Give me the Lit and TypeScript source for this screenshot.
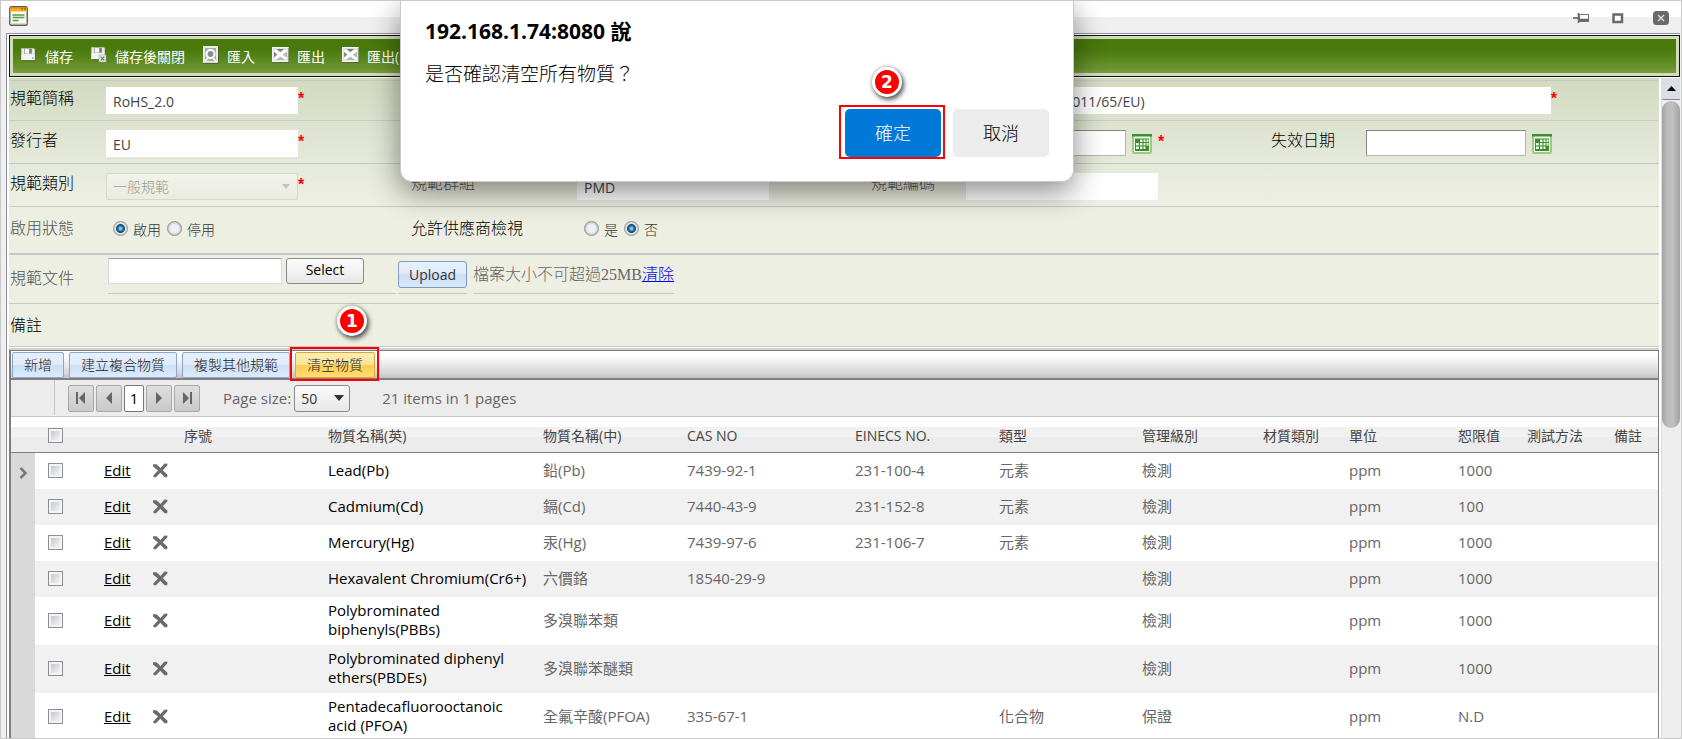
import { LitElement, html, css, svg, nothing } from "lit";
import { customElement, state } from "lit/decorators.js";

interface Substance {
  en: string;
  zh: string;
  cas: string;
  einecs: string;
  kind: string;
  level: string;
  unit: string;
  limit: string;
}

const substances: Substance[] = [
  { en: "Lead(Pb)", zh: "鉛(Pb)", cas: "7439-92-1", einecs: "231-100-4", kind: "元素", level: "檢測", unit: "ppm", limit: "1000" },
  { en: "Cadmium(Cd)", zh: "鎘(Cd)", cas: "7440-43-9", einecs: "231-152-8", kind: "元素", level: "檢測", unit: "ppm", limit: "100" },
  { en: "Mercury(Hg)", zh: "汞(Hg)", cas: "7439-97-6", einecs: "231-106-7", kind: "元素", level: "檢測", unit: "ppm", limit: "1000" },
  { en: "Hexavalent Chromium(Cr6+)", zh: "六價鉻", cas: "18540-29-9", einecs: "", kind: "", level: "檢測", unit: "ppm", limit: "1000" },
  { en: "Polybrominated biphenyls(PBBs)", zh: "多溴聯苯類", cas: "", einecs: "", kind: "", level: "檢測", unit: "ppm", limit: "1000" },
  { en: "Polybrominated diphenyl ethers(PBDEs)", zh: "多溴聯苯醚類", cas: "", einecs: "", kind: "", level: "檢測", unit: "ppm", limit: "1000" },
  { en: "Pentadecafluorooctanoic acid (PFOA)", zh: "全氟辛酸(PFOA)", cas: "335-67-1", einecs: "", kind: "化合物", level: "保證", unit: "ppm", limit: "N.D" },
];

const floppy = svg`
  <path d="M1.5 2.5h12.500l1 1v10.500h-13.500z" fill="#e9e9e9" stroke="#c4c9bc" stroke-width=".6"/>
  <rect x="4" y="2.500" width="8" height="5.500" fill="#a9ada6"/>
  <rect x="5" y="3" width="4" height="4.500" fill="#f6f6f6"/>
  <rect x="9.500" y="3" width="2" height="4" fill="#777c73"/>
  <path d="M1.500 8.500h13.500v5.500H1.500z" fill="#f4f4f4"/>
  <rect x="12" y="11.500" width="1.500" height="1" fill="#6d7368"/>
  <path d="M15.300 4v10.800H2.500" fill="none" stroke="#33500f" stroke-width="1" opacity=".55"/>`;

const sheet = svg`
  <rect x="0" y="1" width="17" height="15" fill="#e2e2e2"/>
  <path d="M2 3h13v11H2z" fill="#b9bcb6"/>
  <path d="M2 3.500h2.500l3.700 3 4-3H15v2l-4.500 3.200 4.500 3v2h-2l-4.700-3.200-4.300 3.200H2v-2l3.700-3L2 5.500z" fill="#fff"/>
  <path d="M2 5.800l3 2.700-3 2.800z" fill="#858b80"/>
  <path d="M5 3h6.500L8.300 5.800z" fill="#777c73"/>
  <rect x=".5" y="1.500" width="16" height="14" fill="none" stroke="#f8f8f8"/>
  <path d="M.5 16.500h16.200V1.500" fill="none" stroke="#405a22" opacity=".7"/>`;

const icons = {
  save: floppy,
  saveClose: svg`<g transform="translate(0 -1)">${floppy}</g>
    <rect x="9" y="9" width="7" height="7" fill="#efefef" stroke="#97a08b" stroke-width=".6"/>
    <path d="M10.700 10.700l3.600 3.600M14.300 10.700l-3.600 3.600" stroke="#777" stroke-width="1.200"/>`,
  importFile: svg`
    <rect x="1" y="0" width="15" height="17" fill="#ececec"/>
    <rect x="3" y="2" width="11" height="13" fill="#aaa"/>
    <circle cx="8.500" cy="8" r="4" fill="#8d8d8d" stroke="#fff" stroke-width="2"/>
    <path d="M3 15l3-3M14 15l-3-3" stroke="#fff" stroke-width="1.500"/>
    <path d="M1.500 17.300h15V1" fill="none" stroke="#405a22" opacity=".7"/>`,
  exportFile: sheet,
};

const calendar = svg`
  <rect x="1" y="1" width="18" height="18" rx="1" fill="#f3faef" stroke="#9bcb83" stroke-width="2"/>
  <rect x="0" y="0" width="20" height="2.500" fill="#3f8f33"/>
  <rect x="3" y="4.500" width="14" height="12.500" fill="#3d8f2e"/>
  <path d="M8 5.500h2.400v2.500H8zM11.500 5.500h2v2.500h-2zM14.500 5.500h2v2.500h-2zM4 9h2.800v2.500H4zM8 9h2.400v2.500H8zM11.500 9h2v2.500h-2zM14.500 9h2v2.500h-2zM4 12.500h2.800v2.500H4zM8 12.500h2.400v2.500H8zM11.500 12.500h2v2.500h-2z" fill="#e9f6e4"/>`;

const sharedStyles = css`
  *, *::before, *::after { box-sizing: border-box; }
  button, input, select { font: inherit; color: inherit; margin: 0; }
  svg { display: block; flex: none; }
`;

@customElement("confirm-dialog")
export class ConfirmDialog extends LitElement {
  static styles = [sharedStyles, css`
    :host { display: block; }
    .box {
      padding: 16px 24px 24px;
      border: 1px solid #c9c9c9;
      border-top: 0;
      border-radius: 0 0 12px 12px;
      background: #fff;
      color: #000;
      box-shadow: 0 10px 30px rgba(0, 0, 0, .45);
    }
    .title { margin: 0; font-size: 21px; line-height: 28px; font-weight: 700; }
    .message { margin: 14px 0 20px; font-size: 19px; line-height: 30px; font-weight: 300; }
    .actions { display: flex; justify-content: flex-end; gap: 12px; }
    .slot { position: relative; }
    .btn {
      display: block; width: 96px; height: 48px; padding: 0 0 2px;
      border: 0; border-radius: 5px; background: #ececec; font-size: 18px; font-weight: 300;
    }
    .primary { background: #0078d7; color: #fff; }
    .mark { position: absolute; inset: -4px -4px -2px -6px; border: 2px solid #f00; pointer-events: none; }
    .badge { position: absolute; left: 27px; top: -42px; }
  `];

  render() {
    return html`
      <div class="box" role="alertdialog" aria-labelledby="t" aria-describedby="m">
        <h2 class="title" id="t">192.168.1.74:8080 說</h2>
        <p class="message" id="m">是否確認清空所有物質？</p>
        <div class="actions">
          <div class="slot">
            <button class="btn primary" type="button">確定</button>
            <span class="mark"></span>
            <step-badge class="badge" .step=${2}></step-badge>
          </div>
          <button class="btn" type="button">取消</button>
        </div>
      </div>`;
  }
}

@customElement("step-badge")
export class StepBadge extends LitElement {
  static properties = { step: { type: Number } };
  declare step: number;
  static styles = css`
    :host {
      display: flex; align-items: center; justify-content: center;
      box-sizing: border-box; width: 30px; height: 30px;
      border: 3px solid #fff; border-radius: 50%;
      background: #f00; color: #fff;
      font: 700 17px/1 "DejaVu Sans", sans-serif;
      box-shadow: 2px 3px 5px rgba(0, 0, 0, .6), 0 0 4px rgba(0, 0, 0, .35);
    }
  `;
  render() { return html`${this.step}`; }
}

@customElement("spec-form")
export class SpecForm extends LitElement {
  static styles = [sharedStyles, css`
    :host { display: block; font-size: 14px; color: #333; }
    .form {
      padding-top: 2px;
      background: linear-gradient(#d2dabf, #dde3cf 46px, #e6eadb 90px, #edefe2 130px);
      border-bottom: 1px solid #fff;
    }
    .row {
      display: grid;
      grid-template-columns: 96px 305fr 166px 294fr 95px 305fr 95px 293fr;
      align-items: start;
      padding: 6px 0 6px 1px;
      border-top: 1px solid #c8c8cc;
    }
    .r-std { height: 43px; }
    .r-first { height: 40px; }
    .r-radio { height: 47px; }
    .r-file { height: 50px; border-top-width: 2px; padding-top: 2px; }
    .r-memo { height: 44px; border-bottom: 1px solid #c8c8cc; }
    .label { font-size: 16px; line-height: 22px; color: #000; font-weight: 300; }
    .r-std .label { padding-top: 2px; }
    .r-radio .label, .r-memo .label { padding-top: 4px; }
    .r-file .label { padding-top: 10px; }
    .dim { color: #555; }
    .field { display: flex; align-items: flex-start; min-width: 0; }
    .long { grid-column: 4 / -1; padding-right: 102px; }
    .long .text { flex: 1; }
    .wide { grid-column: span 7; }
    .text {
      width: 192px; height: 27px; padding: 1px 7px 0; border: 0;
      background: #fff; color: #444;
    }
    .r-std .text, .r-std .date, .r-std .pick { margin-top: 3px; }
    .date {
      width: 160px; height: 26px; padding: 0 6px; background: #fff;
      border: 1px solid #b4b4b4; border-top-color: #868686; border-left-color: #868686;
    }
    .date-btn { margin: 7px 0 0 6px; padding: 0; border: 0; background: none; }
    .req { color: #f00; font-size: 16px; line-height: 24px; font-family: "Liberation Sans", sans-serif; font-weight: 700; }
    .r-std .req { padding-top: 3px; }
    .date-btn + .req { margin-left: 6px; }
    .pick {
      width: 192px; height: 27px; padding: 0 18px 0 6px;
      border: 1px solid #d4d7c9; border-radius: 2px; appearance: none;
      color: #9a9c90; opacity: 1; font-weight: 300;
      background:
        conic-gradient(from -45deg at 50% 100%, #c3c6b8 90deg, transparent 0) right 7px center / 8px 4px no-repeat,
        linear-gradient(#f2f3eb, #eaece1);
      background:
        url('data:image/svg+xml,<svg xmlns="http://www.w3.org/2000/svg" viewBox="0 0 8 5"><path d="M0 0h8L4 5z" fill="%23c3c6b8"/></svg>') right 7px center / 8px 5px no-repeat,
        linear-gradient(#f2f3eb, #eaece1);
    }
    .radios { display: flex; padding-top: 7px; padding-left: 7px; font-weight: 300; }
    .radios label { display: flex; align-items: center; gap: 5px; margin-right: 6px; line-height: 20px; }
    .radio {
      appearance: none; width: 15px; height: 15px; border-radius: 50%;
      border: 1px solid #8f9498; margin-bottom: 4px;
      background: radial-gradient(circle, #eceff3 45%, #b9bec4 75%);
    }
    .radio:checked { background: radial-gradient(circle at 50% 50%, #7fc4e8 0 1px, #1d618f 3px, #17496b 4px, #dfe7ec 5px, #b9bec4 8px); }
    .file { display: flex; align-items: flex-start; padding-left: 2px; }
    .under { height: 37px; padding-top: 1px; border-bottom: 1px solid #c8c8c8; display: flex; align-items: flex-start; }
    .picker { width: 288px; margin-right: 2px; gap: 4px; }
    .path { width: 174px; height: 26px; border: 1px solid #d5dbe6; border-top-color: #9aa0a8; background: #fff; padding: 0 6px; }
    .btn {
      height: 26px; padding: 0 0 3px; border: 1px solid #8a8a8a; border-radius: 3px;
      background: linear-gradient(#fafafa, #f3f3f3 50%, #e6e6e6); color: #000; width: 78px;
    }
    .up {
      width: 69px; height: 27px; padding: 0; margin-top: 4px; border-color: #7d9cc7; color: #333;
      background: linear-gradient(#e6effb, #e2ecfa 45%, #cfdff4 50%, #d9e8fb);
    }
    .upload { padding-top: 0; margin-right: 6px; }
    .note {
      padding-top: 6px; line-height: 24px; font-size: 16px; color: #666; font-weight: 300;
      font-family: "Liberation Serif", "Noto Sans CJK TC", serif;
    }
    .clear { color: #00e; }
  `];

  private required() { return html`<span class="req">*</span>`; }

  private dateField(id: string, required: boolean) {
    return html`
      <div class="field">
        <input class="date" id=${id} type="text" aria-label="日期">
        <button class="date-btn" type="button" aria-label="日期"><svg width="20" height="20" viewBox="0 0 20 20">${calendar}</svg></button>
        ${required ? this.required() : nothing}
      </div>`;
  }

  render() {
    return html`
      <form class="form">
        <div class="row r-first">
          <label class="label" for="short">規範簡稱</label>
          <div class="field"><input class="text" id="short" .value=${"RoHS_2.0"}>${this.required()}</div>
          <div class="field long"><input class="text" id="full" aria-label="規範名稱" .value=${"Restriction of Hazardous Substances in electrical & electronic equipment (2011/65/EU)"}>${this.required()}</div>
        </div>
        <div class="row r-std">
          <label class="label" for="issuer">發行者</label>
          <div class="field"><input class="text" id="issuer" .value=${"EU"}>${this.required()}</div>
          <span></span><span></span><span></span>
          ${this.dateField("start", true)}
          <label class="label" for="end">失效日期</label>
          ${this.dateField("end", false)}
        </div>
        <div class="row r-std">
          <label class="label" for="type">規範類別</label>
          <div class="field"><select class="pick" id="type" disabled><option>一般規範</option></select>${this.required()}</div>
          <label class="label dim" for="group">規範群組</label>
          <div class="field"><input class="text" id="group" .value=${"PMD"}></div>
          <label class="label dim" for="code">規範編碼</label>
          <div class="field"><input class="text" id="code"></div>
        </div>
        <div class="row r-radio">
          <span class="label dim">啟用狀態</span>
          <div class="radios">
            <label><input class="radio" type="radio" name="enabled" checked>啟用</label>
            <label><input class="radio" type="radio" name="enabled">停用</label>
          </div>
          <span class="label">允許供應商檢視</span>
          <div class="radios">
            <label><input class="radio" type="radio" name="visible">是</label>
            <label><input class="radio" type="radio" name="visible" checked>否</label>
          </div>
        </div>
        <div class="row r-file">
          <label class="label dim" for="doc">規範文件</label>
          <div class="file wide">
            <div class="under picker">
              <input class="path" id="doc" type="text">
              <button class="btn" type="button">Select</button>
            </div>
            <div class="under upload"><button class="btn up" type="button">Upload</button></div>
            <span class="under note">檔案大小不可超過25MB</span>
            <span class="under note"><a class="clear" href="#">清除</a></span>
          </div>
        </div>
        <div class="row r-memo"><span class="label">備註</span></div>
      </form>`;
  }
}

@customElement("substance-grid")
export class SubstanceGrid extends LitElement {
  static styles = [sharedStyles, css`
    :host { display: block; border: 1px solid #7e7e7e; border-width: 1px 1px 0 2px; color: #666; }
    .commands {
      display: flex; gap: 5px; height: 29px; padding: 1px 0 2px 1px;
      background: linear-gradient(#fff 15%, #f0f0f0 40%, #d8d8d8 80%, #c4c4c4);
      border-bottom: 2px solid #808080;
    }
    .cmd {
      height: 26px; padding: 0 11px; border: 1px solid #89a7d0; border-radius: 2px;
      background: linear-gradient(#e6effc, #e1ebfa 48%, #cddff3 50%, #dceafc);
      color: #222; font-size: 14px; font-weight: 300; line-height: 24px;
    }
    .hot { border-color: #d9a73a; background: linear-gradient(#fdeeb5, #fae39b 48%, #ffcb4c 50%, #ffdd75); }
    .slot { position: relative; }
    .mark { position: absolute; inset: -5px -4px -5px -5px; border: 2px solid #f00; pointer-events: none; z-index: 2; }
    .badge { position: absolute; left: 42px; top: -46px; z-index: 2; }
    .pager {
      display: flex; align-items: center; height: 37px; padding-left: 57px;
      background: #ececec; border-bottom: 1px solid #c6c6c6; font-size: 15px;
      background-image: linear-gradient(#c6c6c6, #c6c6c6);
      background-size: 1px 35px; background-position: 43px 0; background-repeat: no-repeat;
    }
    .page {
      display: grid; place-items: center; width: 26px; height: 27px; padding: 0; margin-right: 2px;
      border: 1px solid #a9a9a9; border-radius: 2px; color: #666;
      background: linear-gradient(#dedede, #c9c9c9);
    }
    .current { width: 20px; background: #fff; color: #000; border-color: #777; }
    .size-label { margin: 0 3px 0 21px; }
    .size {
      width: 56px; height: 27px; padding: 0 20px 0 6px; appearance: none; margin-right: 32px;
      border: 1px solid #8a8a8a; border-radius: 3px; color: #333; font-size: 14px;
      background:
        url('data:image/svg+xml,<svg xmlns="http://www.w3.org/2000/svg" viewBox="0 0 10 6"><path d="M0 0h10L5 6z" fill="%23333"/></svg>') right 5px center / 10px 6px no-repeat,
        linear-gradient(#fafafa, #e8e8e8);
    }
    .tbl { width: 100%; table-layout: fixed; border-collapse: separate; border-spacing: 0; font-size: 15px; background: #fff; }
    th {
      height: 36px; padding: 1px 7px 0; text-align: left; font-weight: 400; font-size: 14px; color: #444; white-space: nowrap;
      border-bottom: 1px solid #7e7e7e;
      background: linear-gradient(#fff 10px, #f1f1f1 10px, #f1f1f1 20px, #ececec 20px);
    }
    td { height: 36px; padding: 4px 7px 6px; line-height: 19px; vertical-align: middle; }
    .two td { height: 48px; }
    tbody tr:nth-child(even) { background: #f1f1f1; }
    td.handle { background: #d9d9d9; padding: 4px 0 0 8px; }
    th.cb { padding: 2px 0 0 13px; }
    td.cb { padding: 0 0 2px 13px; }
    .tick {
      display: block; appearance: none; width: 15px; height: 15px; border: 1px solid #8e8f8f;
      background: linear-gradient(135deg, #c3cad3, #f4f5f7) content-box, #f4f4f4; padding: 2px;
    }
    .en { color: #000; }
    .edit { color: #000; }
    .del { display: block; padding: 0; border: 0; background: none; }
    .w-handle { width: 24px; } .w-cb { width: 62px; } .w-edit { width: 49px; } .w-del { width: 31px; }
    .w-no { width: 144px; } .w-en { width: 215px; } .w-zh { width: 144px; } .w-cas { width: 168px; }
    .w-einecs { width: 144px; } .w-kind { width: 143px; } .w-level { width: 121px; } .w-mat { width: 86px; }
    .w-unit { width: 109px; } .w-limit { width: 69px; } .w-method { width: 87px; } .w-memo { width: 51px; }
  `];

  private arrow(d: string, label: string) {
    return html`<button class="page" type="button" aria-label=${label}>
      <svg width="12" height="12" viewBox="0 0 12 12"><path d=${d} fill="#666"/></svg></button>`;
  }

  render() {
    const cols = ["handle", "cb", "edit", "del", "no", "en", "zh", "cas", "einecs", "kind", "level", "mat", "unit", "limit", "method", "memo"];
    const heads = ["", "", "序號", "物質名稱(英)", "物質名稱(中)", "CAS NO", "EINECS NO.", "類型", "管理級別", "材質類別", "單位", "恕限值", "測試方法", "備註"];
    return html`
      <div class="commands">
        <button class="cmd" type="button">新增</button>
        <button class="cmd" type="button">建立複合物質</button>
        <button class="cmd" type="button">複製其他規範</button>
        <div class="slot">
          <button class="cmd hot" type="button">清空物質</button>
          <span class="mark"></span>
          <step-badge class="badge" .step=${1}></step-badge>
        </div>
      </div>
      <div class="pager">
        ${this.arrow("M1 0h2v12H1zM10 0v12L4 6z", "First")}
        ${this.arrow("M9 0v12L3 6z", "Previous")}
        <button class="page current" type="button">1</button>
        ${this.arrow("M3 0v12l6-6z", "Next")}
        ${this.arrow("M9 0h2v12H9zM2 0v12l6-6z", "Last")}
        <label class="size-label" for="size">Page size:</label>
        <select class="size" id="size"><option>50</option></select>
        <span>21 items in 1 pages</span>
      </div>
      <table class="tbl">
        <colgroup>${cols.map((c) => html`<col class="w-${c}">`)}</colgroup>
        <thead>
          <tr>
            <th></th>
            <th class="cb"><input class="tick" type="checkbox" aria-label="全選"></th>
            ${heads.map((h) => html`<th>${h}</th>`)}
          </tr>
        </thead>
        <tbody>
          ${substances.map((s, i) => html`
            <tr class=${s.en.length > 28 ? "two" : ""}>
              <td class="handle">${i === 0
                ? html`<svg width="9" height="12" viewBox="0 0 9 12"><path d="M1.500 1l5 5-5 5" fill="none" stroke="#777" stroke-width="2.500"/></svg>`
                : nothing}</td>
              <td class="cb"><input class="tick" type="checkbox" aria-label=${s.en}></td>
              <td><a class="edit" href="#">Edit</a></td>
              <td><button class="del" type="button" aria-label="刪除">
                <svg width="15" height="15" viewBox="0 0 15 15"><path d="M0 1.200h3.500L7.500 5 11.500.500 14.500.800 14.300 2.500 9.800 7.300l4.700 4.500-.3 2.500h-2.700L7.300 9.800 3 14.300H.6L.3 12.500 5 7.500 0 3.500z" fill="#6b6b6b"/></svg>
              </button></td>
              <td></td>
              <td class="en">${s.en}</td>
              <td>${s.zh}</td>
              <td>${s.cas}</td>
              <td>${s.einecs}</td>
              <td>${s.kind}</td>
              <td>${s.level}</td>
              <td></td>
              <td>${s.unit}</td>
              <td>${s.limit}</td>
              <td></td>
              <td></td>
            </tr>`)}
        </tbody>
      </table>`;
  }
}

@customElement("app-root")
export class AppRoot extends LitElement {
  @state() private confirming = true;

  static styles = [sharedStyles, css`
    :host {
      display: block; font-family: "Open Sans", "Noto Sans CJK TC", sans-serif; font-size: 14px; color: #333;
    }
    .window {
      position: relative; display: flex; flex-direction: column; height: 100vh; overflow: hidden;
      border: 1px solid #c9c9c9; background: linear-gradient(#fff 16px, #f0f0f0 16px);
    }
    .titlebar { display: flex; align-items: center; justify-content: space-between; height: 32px; flex: none; padding: 0 7px 2px 8px; }
    .controls { display: flex; align-items: center; gap: 22px; padding-top: 4px; }
    .ctl { padding: 0; border: 0; background: none; }
    .body { flex: 1; min-height: 0; display: flex; flex-direction: column; margin: 0 1px 0 5px; border-left: 1px solid #8e919b; border-top: 1px solid #8e919b; padding: 1px 0 0 2px; background: #fff; }
    .toolbar {
      display: flex; gap: 17px; align-items: center; height: 42px; flex: none; padding: 0 10px;
      border: 1px solid #111; color: #fff; white-space: nowrap;
      background: #d3dcc0 linear-gradient(#47780a, #4a7a0c 35%, #6a9330 80%, #83a644) padding-box;
      box-shadow: inset 0 0 0 3px #d0dcba;
      margin-bottom: 1px;
    }
    .tool { display: flex; align-items: center; gap: 8px; height: 34px; padding: 0; border: 0; background: none; font-size: 14px; font-weight: 400; }
    .tool svg { margin-bottom: 3px; }
    .scroll { flex: 1; min-height: 0; display: flex; }
    .content { flex: 1; min-width: 0; overflow: hidden; padding-right: 2px; background: #fff; }
    .gridwrap { border-top: 2px solid #d0d0d0; }
    .bar { width: 19px; flex: none; background: #eee; border-left: 1px solid #ddd; display: flex; flex-direction: column; gap: 1px; }
    .up { height: 22px; padding: 0; border: 0; border-bottom: 1px solid #888; background: #d9dee7; display: grid; place-items: center; }
    .thumb { height: 327px; border-radius: 9px; background: linear-gradient(90deg, #a2a2a2, #bcbcbc 30%, #c0c0c0 60%, #a2a2a2); }
    .dialog { position: absolute; top: 0; left: 399px; width: 674px; z-index: 5; }
  `];

  render() {
    const tools: [string, unknown][] = [
      ["儲存", icons.save],
      ["儲存後關閉", icons.saveClose],
      ["匯入", icons.importFile],
      ["匯出", icons.exportFile],
      ["匯出(含物質)", icons.exportFile],
    ];
    return html`
      <div class="window">
        <header class="titlebar">
          <svg width="19" height="20" viewBox="0 0 19 20">
            <rect x=".8" y=".8" width="17.400" height="18.400" rx="1.500" fill="#fdfdfa" stroke="#5d5a4e" stroke-width="1.400"/>
            <path d="M1 1h17v4.500H1z" fill="#f4ac27"/><path d="M1 1h17v1.500H1z" fill="#e08a15"/>
            <path d="M12 3h2M15 3h2" stroke="#6d4a10" stroke-width="1.200"/>
            <path d="M3.500 9h12M3.500 11.500h12M3.500 14.500h6" stroke="#4f9a3d" stroke-width="1.300"/>
            <path d="M1 17.500h17" stroke="#d8d8cf"/>
          </svg>
          <div class="controls">
            <button class="ctl" type="button" aria-label="Pin"><svg width="17" height="12" viewBox="0 0 17 12">
              <path d="M0 6h5" stroke="#555" stroke-width="1.500"/><path d="M5.500 1v10" stroke="#666" stroke-width="1.500"/>
              <rect x="6.500" y="2.500" width="9" height="7" fill="#fff" stroke="#777"/><path d="M6.500 8h9" stroke="#666" stroke-width="2.500"/></svg></button>
            <button class="ctl" type="button" aria-label="Maximize"><svg width="12" height="11" viewBox="0 0 12 11">
              <rect x="1.500" y="1.500" width="8.500" height="7.500" fill="#fff" stroke="#686868" stroke-width="2.500"/></svg></button>
            <button class="ctl" type="button" aria-label="Close"><svg width="28" height="14" viewBox="0 0 28 14">
              <rect x="7" y="0" width="16" height="14" rx="3.500" fill="#696969"/><path d="M12 4l6 6M18 4l-6 6" stroke="#ddd" stroke-width="1.400"/></svg></button>
          </div>
        </header>
        <div class="body">
          <nav class="toolbar">
            ${tools.map(([name, icon]) => html`
              <button class="tool" type="button"><svg width="17" height="18" viewBox="0 0 17 18">${icon}</svg><span>${name}</span></button>`)}
          </nav>
          <div class="scroll">
            <main class="content">
              <spec-form></spec-form>
              <div class="gridwrap"><substance-grid></substance-grid></div>
            </main>
            <div class="bar">
              <button class="up" type="button" aria-label="Up"><svg width="9" height="5" viewBox="0 0 9 5"><path d="M0 5L4.500 0 9 5z" fill="#000"/></svg></button>
              <div class="thumb"></div>
            </div>
          </div>
        </div>
        ${this.confirming ? html`<confirm-dialog class="dialog"></confirm-dialog>` : nothing}
      </div>`;
  }
}
